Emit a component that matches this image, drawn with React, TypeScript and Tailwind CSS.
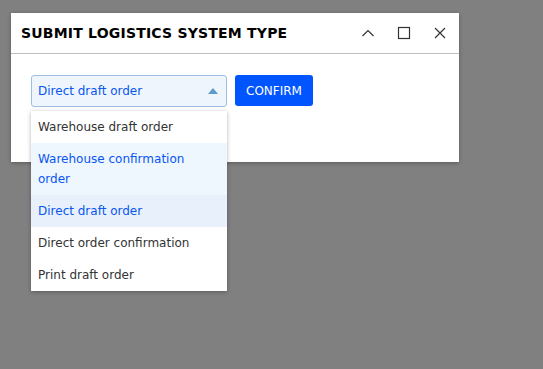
import React from "react";

export default function App() {
  const items = [
    { label: "Warehouse draft order", cls: "text-[#333] bg-white" },
    { label: "Warehouse confirmation order", cls: "text-[#0a55f0] bg-[#eef6fe]" },
    { label: "Direct draft order", cls: "text-[#0a55f0] bg-[#e8f1fb]" },
    { label: "Direct order confirmation", cls: "text-[#333] bg-white" },
    { label: "Print draft order", cls: "text-[#333] bg-white" },
  ];
  return (
    <div
      className="relative w-[543px] h-[369px] bg-[#808080] overflow-hidden"
      style={{ fontFamily: '"DejaVu Sans", Verdana, sans-serif' }}
    >
      <div className="absolute left-[11px] top-[13px] w-[448px] h-[149px] bg-white shadow-[0_1px_4px_rgba(0,0,0,0.3)]">
        <div className="h-[41px] flex items-center justify-between pl-[10px] pr-[12px] border-b border-[#bdbdbd]">
          <span className="font-bold text-[14px] text-black tracking-[0.2px]">SUBMIT LOGISTICS SYSTEM TYPE</span>
          <div className="flex items-center gap-[22px] text-[#333]">
            <svg width="14" height="14" viewBox="0 0 14 14" fill="none" stroke="#333" strokeWidth="1.2">
              <path d="M1.5 10 L7 4.5 L12.5 10" />
            </svg>
            <svg width="14" height="14" viewBox="0 0 14 14" fill="none" stroke="#333" strokeWidth="1.2">
              <rect x="1.5" y="1.5" width="11" height="11" />
            </svg>
            <svg width="14" height="14" viewBox="0 0 14 14" fill="none" stroke="#333" strokeWidth="1.2">
              <path d="M2 2 L12 12 M12 2 L2 12" />
            </svg>
          </div>
        </div>
        <div className="flex items-start gap-[8px] pl-[20px] pt-[21px]">
          <div className="w-[196px] h-[32px] flex items-center justify-between pl-[6px] pr-[7px] rounded-[3px] border border-[#9cbfe0] bg-[#eef5fd]">
            <span className="text-[12px] text-[#0a55f0]">Direct draft order</span>
            <svg width="10" height="6" viewBox="0 0 10 6" className="mr-[1px]">
              <path d="M0 6 L5 0 L10 6 Z" fill="#5b9cc9" />
            </svg>
          </div>
          <button className="h-[31px] px-[11px] rounded-[3px] bg-[#0055ff] text-white text-[12px]">CONFIRM</button>
        </div>
      </div>
      <div className="absolute left-[31px] top-[111px] w-[196px] bg-white shadow-[0_1px_4px_rgba(0,0,0,0.3)] flex flex-col">
        {items.map((it) => (
          <div key={it.label} className={`px-[7px] py-[6px] text-[12px] leading-[20px] ${it.cls}`}>
            {it.label}
          </div>
        ))}
      </div>
    </div>
  );
}
